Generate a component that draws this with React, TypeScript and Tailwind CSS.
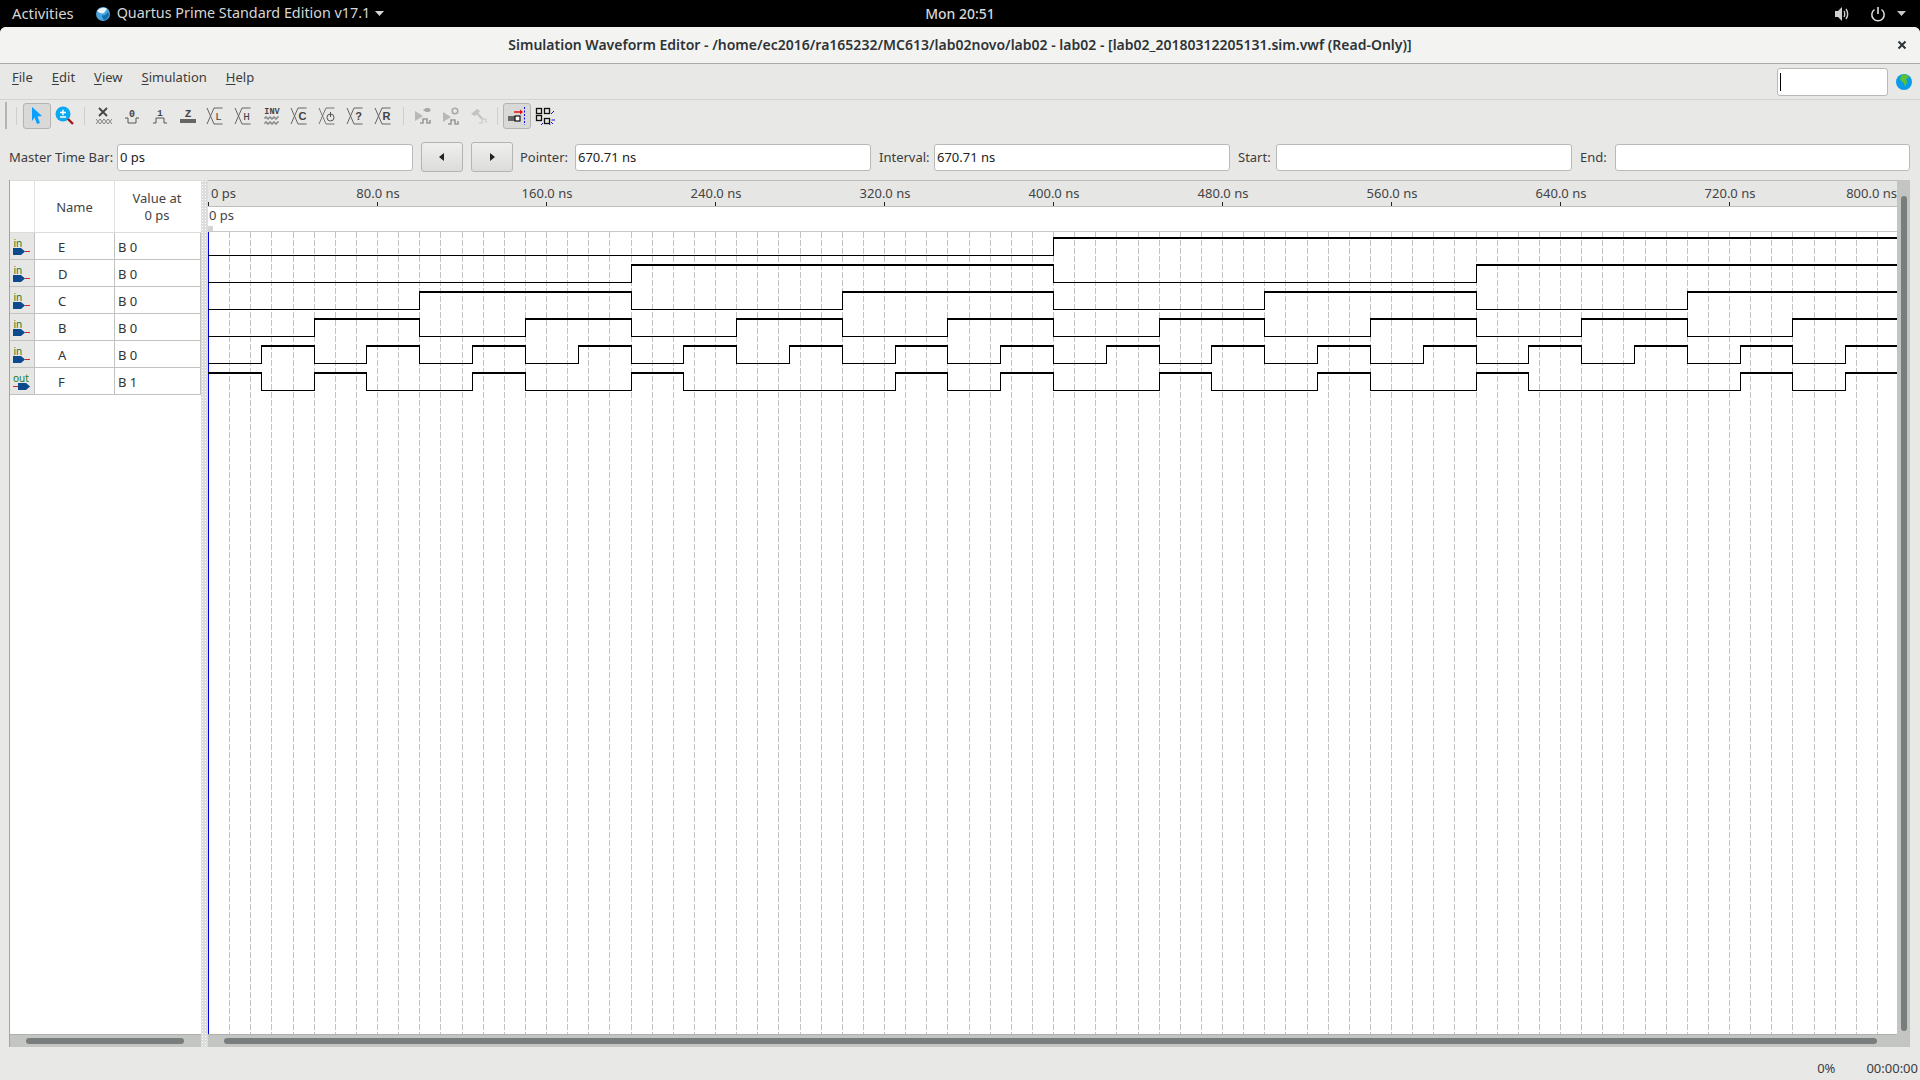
import type { ReactNode } from 'react'

const STEP = 1690 / 32
const TEN_NS = 1690 / 80

// transitions in 25 ns steps, starting level first
const signals: { name: string; value: string; dir: 'in' | 'out'; start: 0 | 1; edges: number[] }[] = [
  { name: 'E', value: 'B 0', dir: 'in', start: 0, edges: [16] },
  { name: 'D', value: 'B 0', dir: 'in', start: 0, edges: [8, 16, 24] },
  { name: 'C', value: 'B 0', dir: 'in', start: 0, edges: [4, 8, 12, 16, 20, 24, 28] },
  { name: 'B', value: 'B 0', dir: 'in', start: 0, edges: [2, 4, 6, 8, 10, 12, 14, 16, 18, 20, 22, 24, 26, 28, 30] },
  { name: 'A', value: 'B 0', dir: 'in', start: 0, edges: Array.from({ length: 31 }, (_, i) => i + 1) },
  { name: 'F', value: 'B 1', dir: 'out', start: 1, edges: [1, 2, 3, 5, 6, 8, 9, 13, 14, 15, 16, 18, 19, 21, 22, 24, 25, 29, 30, 31] },
]

const rulerLabels = [80, 160, 240, 320, 400, 480, 560, 640, 720]

function Wave({ top, start, edges }: { top: number; start: number; edges: number[] }) {
  const high = top + 5
  const low = top + 22.5
  const points = [0, ...edges, 32]
  return (
    <g>
      {points.slice(0, -1).map((p, i) => {
        const x1 = Math.round(p * STEP)
        const x2 = Math.round(points[i + 1] * STEP)
        const level = (start + i) % 2
        return (
          <g key={i}>
            {level === 1 ? (
              <rect x={x1} y={high - 1} width={x2 - x1 + 1} height={2} fill="#000" />
            ) : (
              <rect x={x1} y={low - 0.5} width={x2 - x1 + 1} height={1} fill="#000" />
            )}
            {i > 0 && <rect x={x1} y={high - 1} width={1} height={low - high + 1.5} fill="#000" />}
          </g>
        )
      })}
    </g>
  )
}

function Pin({ dir }: { dir: 'in' | 'out' }) {
  return (
    <svg width="20" height="26" viewBox="0 0 20 26" className="block">
      {dir === 'in' ? (
        <>
          <text x="3.500" y="13.500" fontSize="10" fill="#1a7a1a" fontFamily="'Noto Sans', sans-serif">in</text>
          <path d="M3 15h8l4 3.500-4 3.500H3z" fill="#0b4a8c" />
          <path d="M15 18.500h5" stroke="#e02020" strokeWidth="1" />
        </>
      ) : (
        <>
          <text x="3" y="13.500" fontSize="10" fill="#1a7a1a" fontFamily="'Noto Sans', sans-serif">out</text>
          <path d="M8 15h8l4 3.500-4 3.500H8z" fill="#0b4a8c" />
          <path d="M3 18.500h5" stroke="#e02020" strokeWidth="1" />
        </>
      )}
    </svg>
  )
}

function ToolIcon({ children, active }: { children: ReactNode; active?: boolean }) {
  return (
    <div className={`w-7 h-[26px] flex items-center justify-center shrink-0 rounded-[3px] ${active ? 'bg-[#d9d9d8] border border-[#b4b4b2]' : ''}`}>
      <svg width="20" height="20" viewBox="0 0 20 20" className="block overflow-visible">
        {children}
      </svg>
    </div>
  )
}

function CrossIcon({ letter, bold }: { letter: string; bold?: boolean }) {
  return (
    <>
      <path d="M1 2l7 16h8.500M1 18l7-16h8.500" fill="none" stroke="#666" strokeWidth="1" />
      <text
        x="12.500"
        y="14"
        textAnchor="middle"
        fontSize="11"
        fontWeight={bold ? 700 : 400}
        fill="#444"
        fontFamily={bold ? "'Liberation Sans', sans-serif" : "'Liberation Mono', monospace"}
      >
        {letter}
      </text>
    </>
  )
}

function Separator() {
  return <div className="w-px h-[18px] bg-[#cfcfcd] shrink-0" />
}

function Field({ value, width }: { value?: string; width: string }) {
  return (
    <div className={`${width} h-[27px] shrink-0 bg-white border border-[#b9b9b7] rounded-[3px] px-[2px] flex items-center text-[13px] leading-none text-[#222]`}>
      {value}
    </div>
  )
}

function StepButton({ dir, className }: { dir: 'left' | 'right'; className: string }) {
  return (
    <div className={`w-[42px] h-[30px] shrink-0 rounded-[3px] border border-[#b4b4b2] bg-gradient-to-b from-[#efefee] to-[#dcdcda] flex items-center justify-center ${className}`}>
      <svg width="6" height="8" viewBox="0 0 6 8">
        <path d={dir === 'left' ? 'M5 0v8L0 4z' : 'M1 0v8l5-4z'} fill="#222" />
      </svg>
    </div>
  )
}

export default function App() {
  return (
    <div className="w-[1920px] h-[1080px] bg-black flex flex-col overflow-hidden font-['Noto_Sans',sans-serif] text-[#333]">
      {/* GNOME top bar */}
      <div className="h-[27px] shrink-0 grid grid-cols-[1fr_auto_1fr] items-center text-[14px] text-[#d6d6d6] leading-none">
        <div className="flex items-center pl-3">
          <span className="text-[14.8px]">Activities</span>
          <svg width="16" height="16" viewBox="0 0 16 16" className="ml-[21px]">
            <circle cx="8" cy="8" r="7" fill="#4aa3dc" />
            <path d="M2 5c3-4 8-4 10-2l-3 4C7 8 4 7 2 5z" fill="#e8f4fb" />
            <path d="M7 9c2 1 4 0 6-3l1 3c-1 3-3 5-5 5-1-1-2-3-2-5z" fill="#0f6fb0" />
          </svg>
          <span className="ml-[6px] text-[14.35px]">Quartus Prime Standard Edition v17.1</span>
          <svg width="9" height="5" viewBox="0 0 9 5" className="ml-[5px]">
            <path d="M0 0h9L4.5 5z" fill="#d6d6d6" />
          </svg>
        </div>
        <div className="font-medium">Mon 20:51</div>
        <div className="flex items-center justify-end pr-[14px]">
          <svg width="16" height="16" viewBox="0 0 16 16">
            <path d="M1 5h3l4-4v14l-4-4H1z" fill="#d0d0d0" />
            <path d="M10 5c1 2 1 4 0 6M12 3c2 3 2 7 0 10" fill="none" stroke="#d0d0d0" strokeWidth="1.4" />
          </svg>
          <svg width="16" height="16" viewBox="0 0 16 16" className="ml-[20px]">
            <path d="M8 1v7" stroke="#e0e0e0" strokeWidth="1.6" />
            <path d="M4.5 3.5a6.2 6.2 0 1 0 7 0" fill="none" stroke="#e0e0e0" strokeWidth="1.5" />
          </svg>
          <svg width="9" height="5" viewBox="0 0 9 5" className="ml-[11px]">
            <path d="M0 0h9L4.5 5z" fill="#c8c8c8" />
          </svg>
        </div>
      </div>

      <div className="flex-1 min-h-0 bg-[#e8e8e7] rounded-t-[6px] flex flex-col overflow-hidden">
        {/* Title bar */}
        <div className="h-[37px] shrink-0 bg-[#f3f3f2] border-b border-[#a9a9a6] grid grid-cols-[1fr_auto_1fr] items-center">
          <div />
          <div className="text-[14px] font-semibold text-[#2e3436] leading-none">
            Simulation Waveform Editor - /home/ec2016/ra165232/MC613/lab02novo/lab02 - lab02 - [lab02_20180312205131.sim.vwf (Read-Only)]
          </div>
          <div className="flex justify-end pr-[13px]">
            <svg width="10" height="10" viewBox="0 0 10 10">
              <path d="M1.5 1.5l7 7M8.5 1.5l-7 7" stroke="#2e3436" strokeWidth="2" />
            </svg>
          </div>
        </div>

        {/* Menu bar */}
        <div className="h-[36px] shrink-0 border-b border-[#d2d2d0] flex items-center pl-3 pr-[6px] text-[13px] leading-none text-[#3c3c3c]">
          <div className="flex gap-[19px] flex-1 pb-[9px]">
            {['File', 'Edit', 'View', 'Simulation', 'Help'].map((m) => (
              <span key={m}>
                <span className="underline underline-offset-2">{m[0]}</span>
                {m.slice(1)}
              </span>
            ))}
          </div>
          <div className="w-[111px] h-[28px] bg-white border border-[#b9b9b7] rounded-[3px] flex items-center pl-[2px]">
            <div className="w-px h-[18px] bg-black" />
          </div>
          <svg width="16" height="16" viewBox="0 0 16 16" className="ml-2 mr-[2px]">
            <circle cx="8" cy="8" r="8" fill="#0a9be8" />
            <path d="M6 1c3-1 6 0 7 2l-3 2 1 3-2 5-1-4-3-2-1-3z" fill="#5ec22a" />
          </svg>
        </div>

        {/* Tool bar */}
        <div className="h-[30px] shrink-0 flex items-center pl-[5px] pt-px">
          <div className="w-[2px] h-[27px] bg-[#b4b4b2] mr-[9px]" />
          <Separator />
          <div className="w-[6px]" />
          <ToolIcon active>
            <path d="M5 1l10 9-4.500.5L13 17l-3 1-2.500-6.500L5 15z" fill="#0aa0ff" />
          </ToolIcon>
          <ToolIcon>
            <circle cx="8" cy="8" r="7.500" fill="#0aa8f0" />
            <path d="M5 6.500h6M8 3.800v5.400M5 11h6" stroke="#fff" strokeWidth="1.400" />
            <path d="M13 13l5 5" stroke="#a01818" strokeWidth="2.400" />
          </ToolIcon>
          <div className="w-[5px]" />
          <Separator />
          <div className="w-[5px]" />
          <ToolIcon>
            <path d="M5 2l8 8M13 2l-8 8" stroke="#444" strokeWidth="1.800" />
            <path d="M2 13l4 5 4-5 4 5 4-5M2 18l4-5 4 5 4-5 4 5" fill="none" stroke="#777" strokeWidth="0.900" />
          </ToolIcon>
          <ToolIcon>
            <path d="M3 12h3v5h8v-5h3" fill="none" stroke="#555" strokeWidth="1" />
            <text x="10" y="11" textAnchor="middle" fontSize="10" fontWeight="700" fill="#444" fontFamily="'Liberation Mono', monospace">0</text>
          </ToolIcon>
          <ToolIcon>
            <path d="M3 17h3v-5h8v5h3" fill="none" stroke="#555" strokeWidth="1" />
            <text x="10" y="10" textAnchor="middle" fontSize="9" fontWeight="700" fill="#444" fontFamily="'Liberation Mono', monospace">1</text>
          </ToolIcon>
          <ToolIcon>
            <rect x="2" y="13" width="16" height="4" fill="#666" />
            <text x="10" y="11" textAnchor="middle" fontSize="11" fontWeight="700" fill="#444" fontFamily="'Liberation Mono', monospace">Z</text>
          </ToolIcon>
          <ToolIcon><CrossIcon letter="L" /></ToolIcon>
          <ToolIcon><CrossIcon letter="H" /></ToolIcon>
          <ToolIcon>
            <text x="10" y="8" textAnchor="middle" fontSize="8.500" fontWeight="700" fill="#444" fontFamily="'Liberation Mono', monospace">INV</text>
            <path d="M3 13v-2h2v2h2v-2h2v2h2v-2h2v2h2v-2h2M3 18v-2h2v2h2v-2h2v2h2v-2h2v2h2v-2h2" fill="none" stroke="#666" strokeWidth="0.900" />
          </ToolIcon>
          <ToolIcon><CrossIcon letter="C" bold /></ToolIcon>
          <ToolIcon>
            <path d="M1 2l7 16h8.500M1 18l7-16h8.500" fill="none" stroke="#777" strokeWidth="1" />
            <circle cx="12.500" cy="11.500" r="3.500" fill="none" stroke="#555" strokeWidth="1" />
            <path d="M12.500 6v5" stroke="#555" strokeWidth="1" />
          </ToolIcon>
          <ToolIcon><CrossIcon letter="?" bold /></ToolIcon>
          <ToolIcon><CrossIcon letter="R" bold /></ToolIcon>
          <div className="w-[5px]" />
          <Separator />
          <div className="w-[5px]" />
          <ToolIcon>
            <path d="M2 5l8 5-8 5z" fill="#b8b8b6" />
            <path d="M10 4l3-2h3l2 2-2 2h-3z" fill="#a8a8a6" />
            <path d="M7 17h3v-4h4v4h3v-3" fill="none" stroke="#9a9a98" strokeWidth="1.600" />
          </ToolIcon>
          <ToolIcon>
            <path d="M2 6l8 5-8 5z" fill="#b8b8b6" />
            <circle cx="14" cy="5" r="2.800" fill="none" stroke="#a8a8a6" strokeWidth="1.600" />
            <path d="M7 18h3v-4h4v4h3v-3" fill="none" stroke="#9a9a98" strokeWidth="1.600" />
          </ToolIcon>
          <ToolIcon>
            <path d="M2 8l6-5 3 2-5 5z" fill="#c2c2c0" />
            <path d="M8 7l6 7" stroke="#c2c2c0" strokeWidth="2" />
            <path d="M10 17h3v-4h4v4" fill="none" stroke="#d0d0ce" strokeWidth="1.400" />
          </ToolIcon>
          <div className="w-[4px]" />
          <Separator />
          <div className="w-[5px]" />
          <ToolIcon active>
            <path d="M7 6h8" stroke="#e01010" strokeWidth="1.400" />
            <path d="M13 3.500l3 2.500-3 2.500z" fill="#e01010" />
            <rect x="1" y="10" width="12" height="5" fill="#666" />
            <rect x="8" y="10" width="5" height="5" fill="#fff" stroke="#111" strokeWidth="1.200" />
            <path d="M17.500 1v18" stroke="#1010e0" strokeWidth="1" strokeDasharray="2 1.500" />
          </ToolIcon>
          <ToolIcon>
            <rect x="1.500" y="2.500" width="5" height="5" fill="none" stroke="#111" strokeWidth="1.300" />
            <rect x="9.500" y="2.500" width="5" height="5" fill="none" stroke="#111" strokeWidth="1.300" />
            <rect x="1.500" y="9.500" width="5" height="5" fill="none" stroke="#111" strokeWidth="1.300" />
            <rect x="9.500" y="12.500" width="5" height="5" fill="none" stroke="#111" strokeWidth="1.300" />
            <path d="M16 8l3-3M16.500 14H20M6 19l2-2M15 19l-1-2M18 18l-2-2" stroke="#1010e0" strokeWidth="1" />
          </ToolIcon>
        </div>

        {/* Master time bar */}
        <div className="h-[50px] shrink-0 flex items-center pl-[9px] pt-[4px] text-[13px] leading-none text-[#3c3c3c]">
          <span className="w-[108px] shrink-0">Master Time Bar:</span>
          <Field value="0 ps" width="w-[296px]" />
          <StepButton dir="left" className="ml-2" />
          <StepButton dir="right" className="ml-2" />
          <span className="ml-[7px] w-[55px] shrink-0">Pointer:</span>
          <Field value="670.71 ns" width="w-[296px]" />
          <span className="ml-2 w-[55px] shrink-0">Interval:</span>
          <Field value="670.71 ns" width="w-[296px]" />
          <span className="ml-2 w-[38px] shrink-0">Start:</span>
          <Field width="w-[296px]" />
          <span className="ml-2 w-[35px] shrink-0">End:</span>
          <Field width="w-[295px]" />
        </div>

        {/* Waveform panels */}
        <div className="h-[867px] shrink-0 flex pl-[9px] pr-[10px]">
          {/* Signal table */}
          <div className="w-[192px] shrink-0 flex flex-col bg-white border-l border-[#a3a3a1]">
            <div className="h-[53px] shrink-0 grid grid-cols-[25px_80px_1fr] border-b border-[#dcdcda] border-t text-[13px] text-[#444]">
              <div className="border-r border-[#e2e2e0]" />
              <div className="flex items-center justify-center border-r border-[#e2e2e0] pt-[2px]">Name</div>
              <div className="flex flex-col items-center justify-center leading-[17px] pr-[2px]">
                <span>Value at</span>
                <span>0 ps</span>
              </div>
            </div>
            {signals.map((s) => (
              <div key={s.name} className="h-[27px] shrink-0 grid grid-cols-[25px_80px_1fr] border-b border-[#c2c2c0] text-[13px] leading-none text-[#333]">
                <div className="bg-[#e6e6e5] border-r border-[#c2c2c0] overflow-hidden">
                  <Pin dir={s.dir} />
                </div>
                <div className="flex items-center pl-[23px] pt-[2px] border-r border-[#c2c2c0]">{s.name}</div>
                <div className="flex items-center pl-[3px] pt-[2px] border-r border-[#c2c2c0]">{s.value}</div>
              </div>
            ))}
            <div className="flex-1" />
            <div className="h-[13px] shrink-0 bg-[#c3c5c3] border-t border-[#b0b0ae] flex items-center pl-[16px]">
              <div className="w-[158px] h-[6px] rounded-full bg-[#797d7d]" />
            </div>
          </div>

          {/* Splitter */}
          <div className="w-[7px] shrink-0 bg-[#dcdcda] bg-[radial-gradient(#fff_1px,transparent_1px)] bg-[length:3px_3px]" />

          {/* Wave view */}
          <div className="flex-1 min-w-0 flex flex-col bg-white">
            <div className="h-[27px] shrink-0 relative overflow-hidden bg-[#e6e6e5] border-t border-b border-[#bcbcba] text-[13px] leading-none text-[#444]">
              <span className="absolute left-[3px] top-[6px]">0 ps</span>
              <div className="absolute left-0 bottom-0 w-px h-[4px] bg-[#222]" />
              {rulerLabels.map((ns) => (
                <div key={ns}>
                  <span className="absolute top-[6px] -translate-x-1/2 whitespace-nowrap" style={{ left: (ns / 800) * 1690 + 1 }}>
                    {ns}.0 ns
                  </span>
                  <div className="absolute bottom-0 w-px h-[4px] bg-[#222]" style={{ left: Math.round((ns / 800) * 1690) }} />
                </div>
              ))}
              <span className="absolute right-0 top-[6px] whitespace-nowrap">800.0 ns</span>
            </div>
            <div className="h-[25px] shrink-0 relative border-b border-[#c8c8c6] text-[13px] leading-none text-[#444] pl-[1px] pt-[2px]">
              0 ps
              <div className="absolute left-0 bottom-0 w-[5px] h-[5px] bg-[#d4d4d2]" />
            </div>
            <svg width="1689" height="802" viewBox="0 0 1689 802" className="block shrink-0" shapeRendering="crispEdges">
              {Array.from({ length: 80 }, (_, i) => i + 1).map((i) => (
                <line key={i} x1={Math.round(i * TEN_NS) + 0.5} x2={Math.round(i * TEN_NS) + 0.5} y1={0} y2={802} stroke="#c4c4c4" strokeDasharray="6 2" />
              ))}
              <rect x="0" y="0" width="1" height="802" fill="#0000e6" />
              {signals.map((s, i) => (
                <Wave key={s.name} top={1 + i * 27} start={s.start} edges={s.edges} />
              ))}
            </svg>
            <div className="h-[13px] shrink-0 bg-[#c3c5c3] border-t border-[#b0b0ae] flex items-center pl-[16px]">
              <div className="w-[1653px] h-[6px] rounded-full bg-[#797d7d]" />
            </div>
          </div>

          {/* Vertical scroll bar */}
          <div className="w-[13px] shrink-0 bg-[#c3c5c3] pt-[16px] pb-[16px] pl-[4px]">
            <div className="w-[6px] h-full rounded-full bg-[#797d7d]" />
          </div>
        </div>

        {/* Status bar */}
        <div className="flex-1 flex items-center justify-end pr-[2px] pt-[10px] text-[13px] leading-none text-[#3c3c3c]">
          <span className="mr-[31px]">0%</span>
          <span>00:00:00</span>
        </div>
      </div>
    </div>
  )
}
